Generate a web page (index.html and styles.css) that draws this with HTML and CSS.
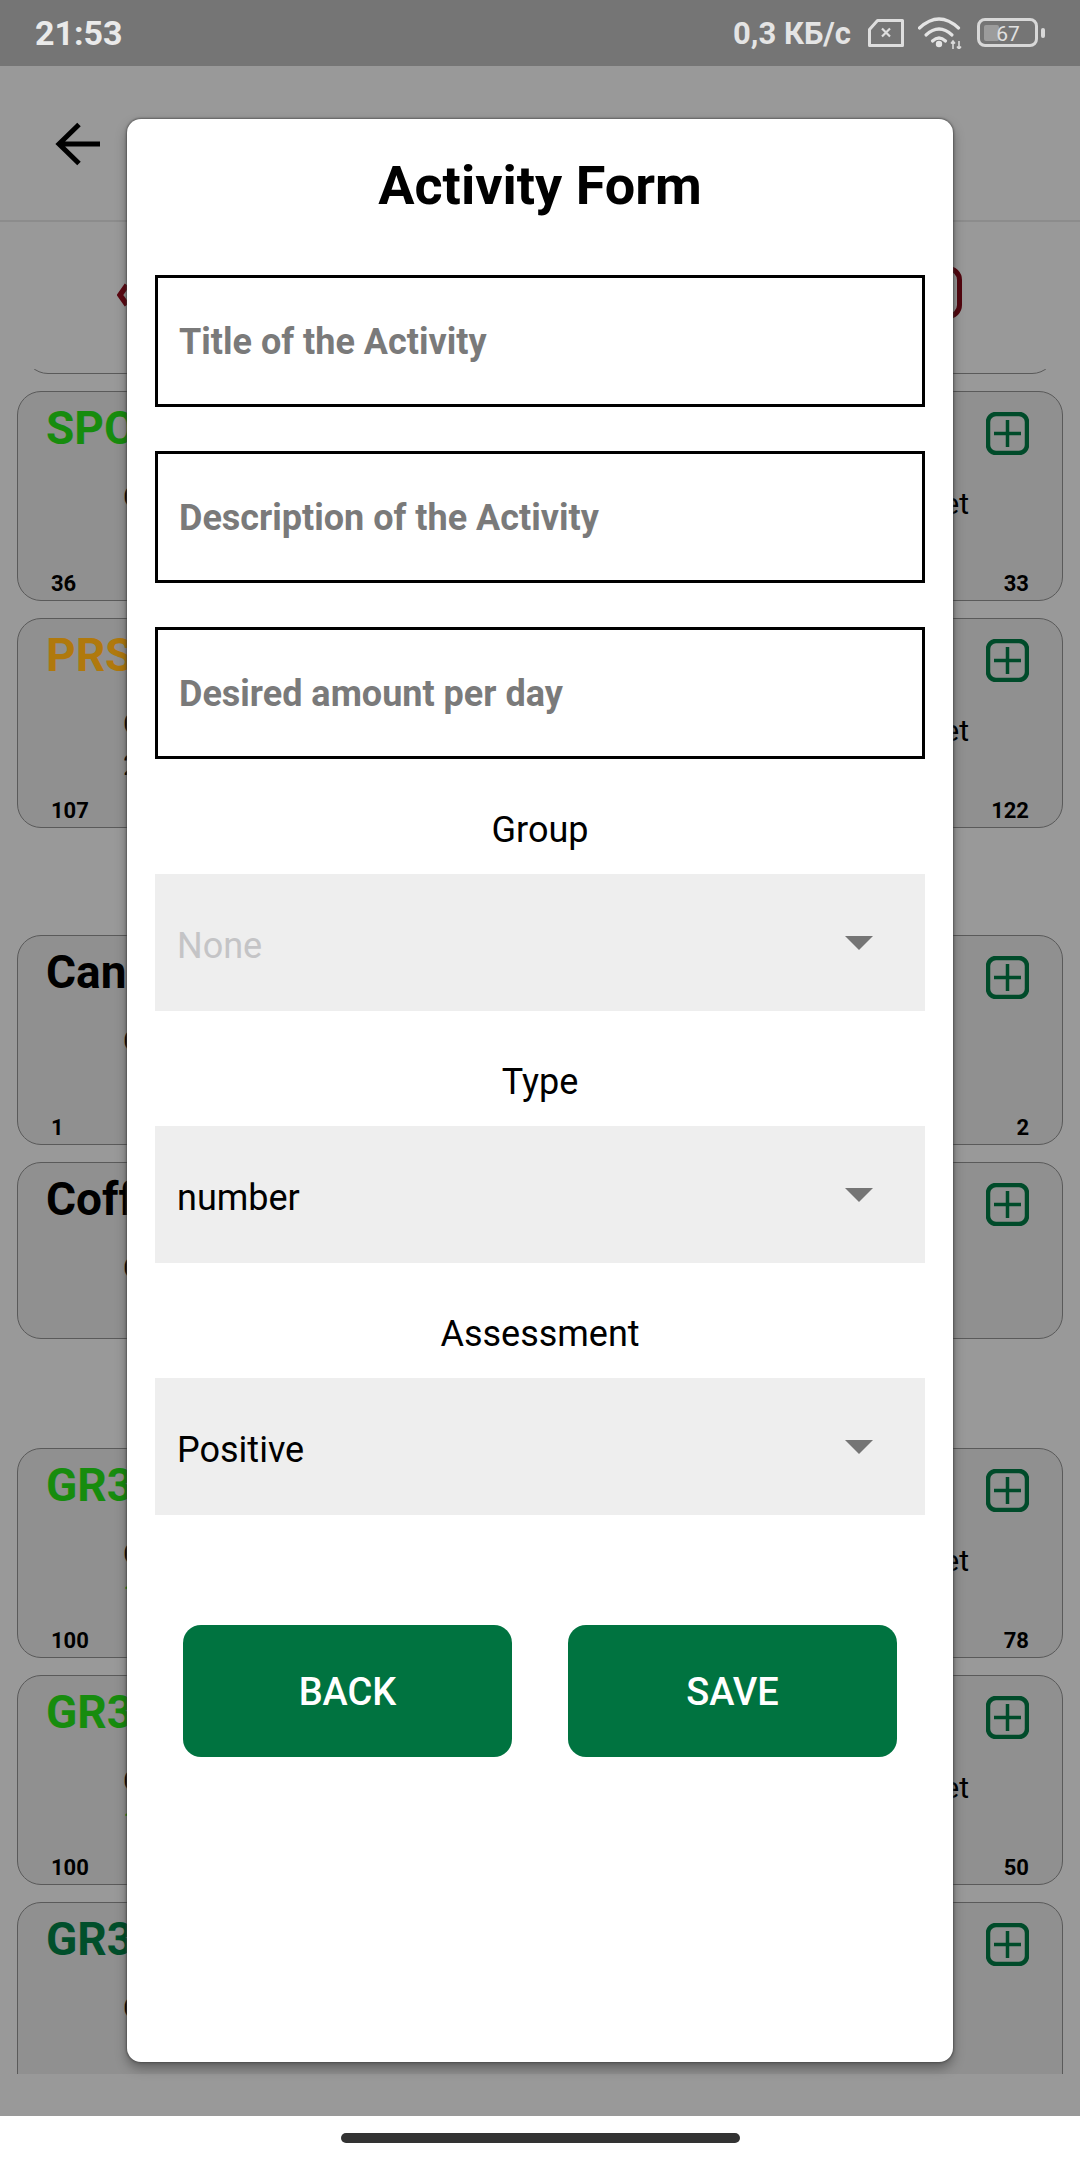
FILE: index.html
```html
<!DOCTYPE html>
<html lang="en">
<head>
<meta charset="utf-8">
<title>Activity Form</title>
<link rel="stylesheet" href="styles.css">
</head>
<body>
<div class="screen">
  <div class="status">
    <span class="time">21:53</span>
    <div class="status-right">
      <span class="speed">0,3 КБ/с</span>
      <svg class="sim" width="36" height="28" viewBox="0 0 36 28"><path d="M9.500 1.500H34.500V26.500H1.500V10.500Z" fill="none" stroke="#dedede" stroke-width="3" stroke-linejoin="round"/><path d="M14 9.500l8 8M22 9.500l-8 8" stroke="#dedede" stroke-width="2.200"/></svg>
      <svg class="wifi" width="44" height="32" viewBox="0 0 44 32"><g fill="none" stroke="#e4e4e4" stroke-width="3.200" stroke-linecap="round"><path d="M1.500 11Q21-7 40.500 11"/><path d="M8 18Q21 6 34 18"/><path d="M14.500 24Q21 18 27.500 24"/></g><circle cx="21" cy="27" r="3.200" fill="#e4e4e4"/><path d="M35 32V24M33 26.500l2-2.500 2 2.500M41 24V32M39 29.500l2 2.500 2-2.500" fill="none" stroke="#dadada" stroke-width="1.600"/></svg>
      <svg class="battery" width="68" height="30" viewBox="0 0 68 30"><rect x="1.500" y="1.500" width="58" height="26" rx="6.500" fill="none" stroke="#d8d8d8" stroke-width="3"/><rect x="7" y="7" width="15" height="16" rx="2" fill="#9c9c9c"/><rect x="64" y="10" width="4" height="10" rx="2" fill="#d8d8d8"/><text x="31" y="23" text-anchor="middle" class="battery-text">67</text></svg>
    </div>
  </div>
  <div class="header">
    <svg class="back" width="46" height="44" viewBox="0 0 46 44"><path d="M45 22H4M24 2.500L4 22l20 19.500" fill="none" stroke="#000" stroke-width="5"/></svg>
    <span class="header-title">Activities</span>
  </div>
  <div class="filters">
    <svg class="prev" width="12" height="26" viewBox="0 0 12 26"><path d="M10 3L3 13l7 10" fill="none" stroke="#5c0812" stroke-width="5.500"/></svg>
    <div class="filter-box">Today</div>
  </div>
  <div class="list">
    <div class="card card-cut"></div>

    <div class="card">
      <div class="head"><span class="name green">SPORT</span><svg class="plus" width="43" height="43" viewBox="0 0 43 43"><rect x="2" y="2" width="39" height="39" rx="8"/><path d="M8 21.500H35M21.500 8V35"/></svg></div>
      <div class="mid"><span>Cur.</span><span class="target">Target</span></div>
      <div class="foot"><span>36</span><span>33</span></div>
    </div>
    <div class="card">
      <div class="head"><span class="name orange">PRSN</span><svg class="plus" width="43" height="43" viewBox="0 0 43 43"><rect x="2" y="2" width="39" height="39" rx="8"/><path d="M8 21.500H35M21.500 8V35"/></svg></div>
      <div class="mid"><div class="mid-left"><span>Cur.</span><span class="value">2</span></div><span class="target">Target</span></div>
      <div class="foot"><span>107</span><span>122</span></div>
    </div>

    <div class="card section-start">
      <div class="head"><span class="name">Candy</span><svg class="plus" width="43" height="43" viewBox="0 0 43 43"><rect x="2" y="2" width="39" height="39" rx="8"/><path d="M8 21.500H35M21.500 8V35"/></svg></div>
      <div class="mid"><span>Cur.</span></div>
      <div class="foot"><span>1</span><span>2</span></div>
    </div>
    <div class="card card-short">
      <div class="head"><span class="name">Coffee</span><svg class="plus" width="43" height="43" viewBox="0 0 43 43"><rect x="2" y="2" width="39" height="39" rx="8"/><path d="M8 21.500H35M21.500 8V35"/></svg></div>
      <div class="mid"><span>Cur.</span></div>
    </div>

    <div class="card section-start">
      <div class="head"><span class="name green">GR3 A</span><svg class="plus" width="43" height="43" viewBox="0 0 43 43"><rect x="2" y="2" width="39" height="39" rx="8"/><path d="M8 21.500H35M21.500 8V35"/></svg></div>
      <div class="mid"><div class="mid-left"><span>Cur.</span><span class="value green">1</span></div><span class="target">Target</span></div>
      <div class="foot"><span>100</span><span>78</span></div>
    </div>
    <div class="card">
      <div class="head"><span class="name green">GR3 B</span><svg class="plus" width="43" height="43" viewBox="0 0 43 43"><rect x="2" y="2" width="39" height="39" rx="8"/><path d="M8 21.500H35M21.500 8V35"/></svg></div>
      <div class="mid"><div class="mid-left"><span>Cur.</span><span class="value green">1</span></div><span class="target">Target</span></div>
      <div class="foot"><span>100</span><span>50</span></div>
    </div>
    <div class="card">
      <div class="head"><span class="name dark">GR3 C</span><svg class="plus" width="43" height="43" viewBox="0 0 43 43"><rect x="2" y="2" width="39" height="39" rx="8"/><path d="M8 21.500H35M21.500 8V35"/></svg></div>
      <div class="mid"><span>Cur.</span></div>
    </div>
  </div>
  <div class="list-foot"></div>
  <div class="nav"><div class="pill"></div></div>

  <div class="modal">
    <h1 class="modal-title">Activity Form</h1>
    <div class="fields">
      <div class="input">Title of the Activity</div>
      <div class="input">Description of the Activity</div>
      <div class="input">Desired amount per day</div>
    </div>
    <div class="label">Group</div>
    <div class="select"><span class="muted">None</span><span class="caret"></span></div>
    <div class="label">Type</div>
    <div class="select"><span>number</span><span class="caret"></span></div>
    <div class="label">Assessment</div>
    <div class="select"><span>Positive</span><span class="caret"></span></div>
    <div class="buttons">
      <div class="btn">BACK</div>
      <div class="btn">SAVE</div>
    </div>
  </div>
</div>
</body>
</html>
```

FILE: styles.css
```css
* { box-sizing: border-box; }
html, body { margin: 0; padding: 0; }
body { width: 1080px; height: 2160px; overflow: hidden; font-family: Roboto, "Noto Sans", sans-serif; background: #999; }
.screen { position: relative; width: 1080px; height: 2160px; display: flex; flex-direction: column; background: #999; }

.status { height: 66px; flex: none; background: #757575; color: #eaeaea; display: flex; align-items: center; justify-content: space-between; padding: 0 35px 0 35px; }
.time { font-size: 34px; font-weight: 700; }
.status-right { display: flex; align-items: center; }
.speed { font-size: 31px; font-weight: 700; margin-right: 17px; color: #e4e4e4; }
.sim { margin-right: 14px; }
.wifi { margin-right: 15px; }
.battery-text { font: 400 21px Roboto, sans-serif; fill: #e0e0e0; }

.header { height: 156px; flex: none; border-bottom: 2px solid #8c8c8c; display: flex; align-items: flex-start; padding: 56px 0 0 55px; }
.header-title { margin-left: 100px; font-size: 40px; color: #000; }

.filters { height: 147px; flex: none; display: flex; align-items: flex-start; justify-content: space-between; padding: 44px 118px 0 117px; }
.prev { margin-top: 16px; }
.filter-box { width: 300px; height: 53px; border: 5px solid #52060f; border-radius: 14px; color: #52060f; font-size: 26px; display: flex; align-items: center; justify-content: center; }

.list { height: 1705px; flex: none; overflow: hidden; display: flex; flex-direction: column; padding: 0 17px; }
.card { flex: none; height: 210px; margin-top: 17px; padding: 0 33px 0 31px; background: #909090; border: 1px solid #5a5a5a; border-radius: 24px; display: flex; flex-direction: column; }
.card-cut { height: 200px; margin-top: -195px; margin-left: 7px; margin-right: 7px; background: #999; }
.card-short { height: 177px; margin-bottom: 2px; }
.section-start { margin-top: 107px; }

.head { height: 74px; flex: none; display: flex; align-items: flex-start; justify-content: space-between; }
.name { font-size: 46px; line-height: 50px; font-weight: 700; padding-top: 11px; margin-left: -3px; color: #000; }
.green { color: #178c0e; }
.orange { color: #b0790d; }
.dark { color: #014f2b; }
.plus { margin-top: 20px; fill: none; stroke: #004b2a; stroke-width: 4.500; }
.plus path { stroke-width: 3.500; }

.mid { height: 76px; flex: none; display: flex; align-items: flex-start; justify-content: space-between; padding: 13px 60px 0 74px; font-size: 30px; line-height: 36px; color: #000; }
.mid-left { display: flex; flex-direction: column; }
.target { margin-top: 7px; }
.value { margin-top: 5px; font-size: 30px; }

.foot { margin-top: auto; height: 32px; display: flex; justify-content: space-between; font-size: 22px; font-weight: 700; line-height: 32px; color: #000; padding-left: 2px; }

.list-foot { height: 42px; flex: none; background: #999; }
.nav { height: 44px; flex: none; background: #fff; display: flex; justify-content: center; padding-top: 17px; }
.pill { width: 399px; height: 10px; border-radius: 5px; background: #333; }

.modal { position: absolute; left: 127px; top: 119px; width: 826px; height: 1943px; padding: 0 28px; background: #fff; border-radius: 14px; box-shadow: 0 0 2px 1px rgba(60, 60, 60, 0.6), 0 6px 12px rgba(0, 0, 0, 0.35); display: flex; flex-direction: column; }
.modal-title { margin: 37px 0 59px; height: 60px; text-align: center; font-size: 54px; line-height: 60px; font-weight: 700; color: #000; }
.fields { display: flex; flex-direction: column; gap: 44px; }
.input { height: 132px; border: 3px solid #000; padding: 2px 0 0 21px; display: flex; align-items: center; font-size: 36px; font-weight: 700; color: #7a7a7a; }
.label { margin-top: 51px; height: 40px; line-height: 40px; margin-bottom: 24px; text-align: center; font-size: 36px; color: #000; }
.select { height: 137px; background: #eee; display: flex; align-items: center; justify-content: space-between; padding: 6px 52px 0 22px; font-size: 36px; color: #000; }
.muted { color: #c4c4c6; }
.caret { width: 0; height: 0; margin-top: -6px; border-left: 14px solid transparent; border-right: 14px solid transparent; border-top: 14px solid #757575; }
.buttons { margin-top: 110px; padding: 0 28px; display: flex; justify-content: space-between; }
.btn { width: 329px; height: 132px; padding-top: 2px; border-radius: 18px; background: #007340; color: #fff; font-size: 38px; font-weight: 500; display: flex; align-items: center; justify-content: center; }
```
